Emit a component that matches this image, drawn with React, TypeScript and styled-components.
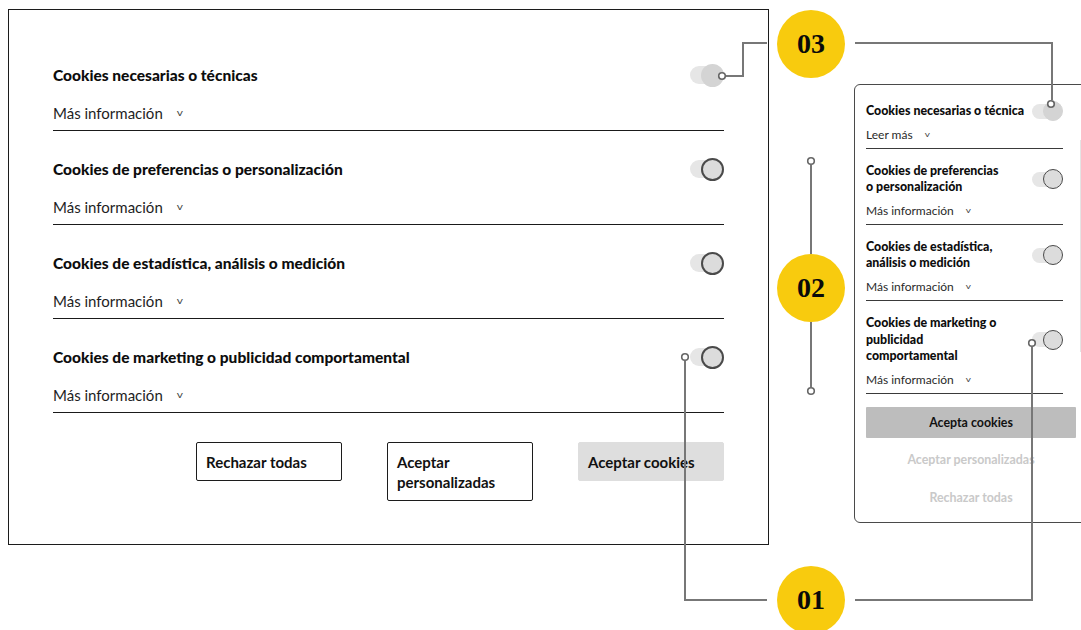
import React from "react";
import styled, { createGlobalStyle } from "styled-components";

const Global = createGlobalStyle`
  html, body { margin: 0; padding: 0; background: #fff; }
  body { font-family: Lato, "Noto Sans", Arial, sans-serif; color: #111; }
  * { box-sizing: border-box; }
`;

const Stage = styled.div`
  position: relative;
  width: 1081px;
  height: 630px;
  overflow: hidden;
  display: flex;
  align-items: flex-start;
  padding: 9px 0 0 8px;
  background: #fff;
`;

/* ---------- Left (desktop) panel ---------- */
const DesktopPanel = styled.section`
  flex-shrink: 0;
  width: 761px;
  height: 536px;
  border: 1px solid #1c1c1c;
  padding: 27px 44px 0;
  display: flex;
  flex-direction: column;
`;

const Category = styled.div`
  padding: 28px 0 7px;
  border-bottom: 1px solid #1a1a1a;
`;

const CategoryHead = styled.div`
  display: flex;
  align-items: center;
  justify-content: space-between;
  height: 20px;
`;

const CategoryTitle = styled.h3`
  margin: 0;
  font-size: 15.5px;
  line-height: 20px;
  font-weight: 900;
  color: #0d0d0d;
`;

const MoreInfo = styled.div`
  margin-top: 18px;
  font-size: 15px;
  line-height: 20px;
  color: #1e1e1e;
  display: flex;
  align-items: center;
`;

const Chevron = styled.span<{ $gap: number; $size: number }>`
  margin-left: ${(p) => p.$gap}px;
  font-size: ${(p) => p.$size}px;
  color: #444;
  transform: scaleY(0.8);
  display: inline-block;
`;

const Actions = styled.div`
  margin-top: 29px;
  display: flex;
  justify-content: flex-end;
  align-items: flex-start;
  gap: 45px;
`;

const ActionButton = styled.button<{ $filled?: boolean }>`
  width: 146px;
  padding: 9px 9px 8px;
  text-align: left;
  font-family: Lato, "Noto Sans", Arial, sans-serif;
  font-size: 15px;
  line-height: 20px;
  font-weight: 700;
  color: #111;
  background: ${(p) => (p.$filled ? "#dedede" : "#fff")};
  border: 1px solid ${(p) => (p.$filled ? "#dedede" : "#1c1c1c")};
  border-radius: 2px;
`;

/* ---------- Switches ---------- */
const Switch = styled.span<{ $small?: boolean }>`
  display: inline-flex;
  align-items: center;
  flex-shrink: 0;
  margin: ${(p) => (p.$small ? "-2px 0" : "0")};
`;

const Track = styled.span<{ $small?: boolean }>`
  width: ${(p) => (p.$small ? 29 : 30)}px;
  height: ${(p) => (p.$small ? 15 : 18)}px;
  border-radius: 10px;
  background: #e6e6e6;
`;

const Knob = styled.span<{ $small?: boolean; $disabled?: boolean }>`
  width: ${(p) => (p.$small ? 20 : 23)}px;
  height: ${(p) => (p.$small ? 20 : 23)}px;
  margin-left: ${(p) => (p.$small ? -18 : -19)}px;
  border-radius: 50%;
  background: ${(p) => (p.$disabled ? "#d4d4d4" : "#dcdcdc")};
  border: ${(p) => (p.$small ? 1.5 : 2)}px solid
    ${(p) => (p.$disabled ? "#d4d4d4" : "#4a4a4a")};
`;

const Toggle = ({ small, disabled }: { small?: boolean; disabled?: boolean }) => (
  <Switch $small={small}>
    <Track $small={small} />
    <Knob $small={small} $disabled={disabled} />
  </Switch>
);

/* ---------- Right (mobile) panel ---------- */
const MobilePanel = styled.section`
  position: relative;
  flex-shrink: 0;
  margin: 75px 0 0 85px;
  width: 240px;
  height: 439px;
  border: 1px solid #4a4a4a;
  border-radius: 6px;
  padding: 4px 0 0 11px;
  display: flex;
  flex-direction: column;
`;

const ScrollHint = styled.span`
  position: absolute;
  left: 225px;
  top: 55px;
  width: 1px;
  height: 212px;
  background: #e4e4e4;
`;

const MiniCategory = styled.div`
  width: 197px;
  padding: 14px 0 5px;
  border-bottom: 1px solid #3a3a3a;
`;

const MiniHead = styled.div`
  display: flex;
  align-items: center;
  justify-content: space-between;
`;

const MiniTitle = styled.h4<{ $nowrap?: boolean }>`
  margin: 0;
  font-size: 12.4px;
  line-height: 16.6px;
  font-weight: 900;
  color: #0d0d0d;
  max-width: ${(p) => (p.$nowrap ? "none" : "135px")};
  white-space: ${(p) => (p.$nowrap ? "nowrap" : "normal")};
`;

const MiniMore = styled.div`
  margin-top: 6px;
  font-size: 12px;
  line-height: 17px;
  color: #2a2a2a;
  display: flex;
  align-items: center;
`;

const MiniPrimary = styled.button`
  margin-top: 13px;
  width: 210px;
  height: 31px;
  border: none;
  border-radius: 1px;
  background: #bdbdbd;
  font-family: Lato, "Noto Sans", Arial, sans-serif;
  font-size: 12.4px;
  font-weight: 700;
  color: #111;
`;

const MiniLink = styled.button<{ $first?: boolean }>`
  margin-top: ${(p) => (p.$first ? 3 : 0)}px;
  width: 210px;
  height: 38px;
  border: none;
  background: transparent;
  font-family: Lato, "Noto Sans", Arial, sans-serif;
  font-size: 12.4px;
  font-weight: 700;
  color: #c9c9c9;
`;

/* ---------- Annotations ---------- */
const Wires = styled.svg`
  position: absolute;
  left: 0;
  top: 0;
  pointer-events: none;
  z-index: 1;
`;

const Badge = styled.div<{ $cx: number; $cy: number }>`
  position: absolute;
  left: ${(p) => p.$cx - 34}px;
  top: ${(p) => p.$cy - 34}px;
  width: 68px;
  height: 68px;
  border-radius: 50%;
  background: #f8cb0e;
  display: flex;
  align-items: center;
  justify-content: center;
  font-family: "Liberation Serif", "Times New Roman", serif;
  font-weight: 700;
  font-size: 28px;
  color: #0a0a0a;
  z-index: 2;
`;

const desktopItems = [
  { title: "Cookies necesarias o técnicas", disabled: true },
  { title: "Cookies de preferencias o personalización" },
  { title: "Cookies de estadística, análisis o medición" },
  { title: "Cookies de marketing o publicidad comportamental" },
];

const mobileItems = [
  { title: "Cookies de preferencias o personalización" },
  { title: "Cookies de estadística, análisis o medición" },
  { title: "Cookies de marketing o publicidad comportamental" },
];

const Dot = ({ x, y }: { x: number; y: number }) => (
  <circle cx={x} cy={y} r={3.3} fill="#fff" stroke="#666" strokeWidth={1.6} />
);

export default function App() {
  return (
    <>
      <Global />
      <Stage>
        <DesktopPanel>
          {desktopItems.map((it) => (
            <Category key={it.title}>
              <CategoryHead>
                <CategoryTitle>{it.title}</CategoryTitle>
                <Toggle disabled={it.disabled} />
              </CategoryHead>
              <MoreInfo>
                Más información<Chevron $gap={14} $size={12}>v</Chevron>
              </MoreInfo>
            </Category>
          ))}
          <Actions>
            <ActionButton>Rechazar todas</ActionButton>
            <ActionButton>Aceptar personalizadas</ActionButton>
            <ActionButton $filled>Aceptar cookies</ActionButton>
          </Actions>
        </DesktopPanel>

        <MobilePanel>
          <ScrollHint />
          <MiniCategory>
            <MiniHead>
              <MiniTitle $nowrap>Cookies necesarias o técnica</MiniTitle>
              <Toggle small disabled />
            </MiniHead>
            <MiniMore>
              Leer más<Chevron $gap={12} $size={10}>v</Chevron>
            </MiniMore>
          </MiniCategory>
          {mobileItems.map((it) => (
            <MiniCategory key={it.title}>
              <MiniHead>
                <MiniTitle>{it.title}</MiniTitle>
                <Toggle small />
              </MiniHead>
              <MiniMore>
                Más información<Chevron $gap={12} $size={10}>v</Chevron>
              </MiniMore>
            </MiniCategory>
          ))}
          <MiniPrimary>Acepta cookies</MiniPrimary>
          <MiniLink $first>Aceptar personalizadas</MiniLink>
          <MiniLink>Rechazar todas</MiniLink>
        </MobilePanel>

        <Wires width={1081} height={630} viewBox="0 0 1081 630">
          <g fill="none" stroke="#777" strokeWidth={2}>
            <path d="M725 76 H743 V43 H767" />
            <path d="M855 43 H1052 V100" />
            <path d="M811 165 V254" />
            <path d="M811 322 V387" />
            <path d="M685 361 V600 H767" />
            <path d="M855 600 H1032 V347" />
          </g>
          <Dot x={722} y={76} />
          <Dot x={1051} y={104} />
          <Dot x={811} y={161} />
          <Dot x={811} y={391} />
          <Dot x={685} y={357} />
          <Dot x={1032} y={343} />
        </Wires>

        <Badge $cx={811} $cy={44}>03</Badge>
        <Badge $cx={811} $cy={288}>02</Badge>
        <Badge $cx={811} $cy={600}>01</Badge>
      </Stage>
    </>
  );
}
